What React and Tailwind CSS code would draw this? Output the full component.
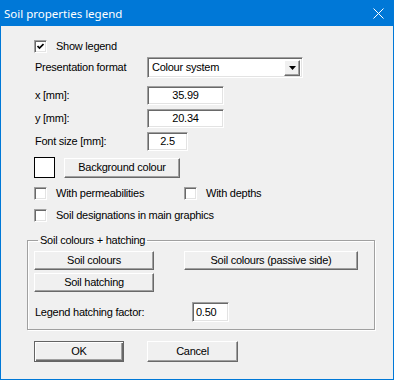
import React from "react";

const raised =
  "bg-[#f0f0f0] border border-t-white border-l-white border-r-[#696969] border-b-[#696969] shadow-[inset_-1px_-1px_0_#a0a0a0] flex items-center justify-center";
const sunken =
  "bg-white border border-t-[#a0a0a0] border-l-[#a0a0a0] border-r-white border-b-white shadow-[inset_1px_1px_0_#696969,inset_-1px_-1px_0_#e3e3e3] flex items-center";

function Check({ checked }) {
  return (
    <span className={"w-[13px] h-[13px] shrink-0 justify-center " + sunken}>
      {checked && (
        <svg width="7" height="7" viewBox="0 0 7 7">
          <polyline points="0.5,3 2.5,5 6.5,1" fill="none" stroke="black" strokeWidth="1.7" />
        </svg>
      )}
    </span>
  );
}

function Btn({ w, h = 19, children, cls = "" }) {
  return (
    <div className={raised + " " + cls} style={{ width: w, height: h }}>
      {children}
    </div>
  );
}

export default function App() {
  return (
    <div className="w-[394px] h-[380px] border border-[#0078d7] bg-[#f0f0f0] flex flex-col text-black text-[11px] leading-[13px] tracking-[-0.25px] font-['Liberation_Sans',Arial,sans-serif]">
      <div className="h-[25px] shrink-0 bg-[#0078d7] flex items-center justify-between pl-[3px] pr-[9px]">
        <span className="text-white text-[11.5px] tracking-normal font-['Noto_Sans',sans-serif]">Soil properties legend</span>
        <svg width="11" height="11" viewBox="0 0 11 11">
          <path d="M0.5 0.5 L10.5 10.5 M10.5 0.5 L0.5 10.5" stroke="white" strokeWidth="1" fill="none" />
        </svg>
      </div>

      <div className="flex flex-col">
        <div className="ml-[33px] mt-[14px] h-[13px] flex items-center gap-[9px]">
          <Check checked />
          <span>Show legend</span>
        </div>

        <div className="ml-[33px] mt-[4px] h-[21px] flex items-center">
          <span className="w-[113px] pl-[1px]">Presentation format</span>
          <div className={"w-[156px] h-[21px] justify-between pl-[4px] pr-[2px] " + sunken}>
            <span>Colour system</span>
            <div className={raised + " w-[16px] h-[16px]"}>
              <svg width="7" height="4" viewBox="0 0 7 4">
                <path d="M0 0 H7 L3.5 4 Z" fill="black" />
              </svg>
            </div>
          </div>
        </div>

        <div className="ml-[33px] mt-[8px] h-[19px] flex items-center">
          <span className="w-[113px] pl-[1px]">x [mm]:</span>
          <div className={"w-[77px] h-[19px] justify-center " + sunken}>35.99</div>
        </div>
        <div className="ml-[33px] mt-[4px] h-[19px] flex items-center">
          <span className="w-[113px] pl-[1px]">y [mm]:</span>
          <div className={"w-[77px] h-[19px] justify-center " + sunken}>20.34</div>
        </div>
        <div className="ml-[33px] mt-[4px] h-[19px] flex items-center">
          <span className="w-[113px] pl-[1px]">Font size [mm]:</span>
          <div className={"w-[41px] h-[19px] justify-center " + sunken}>2.5</div>
        </div>

        <div className="ml-[33px] mt-[6px] h-[21px] flex items-center gap-[9px]">
          <div className="w-[21px] h-[21px] bg-white border border-black" />
          <Btn w={116} h={20}>Background colour</Btn>
        </div>

        <div className="ml-[33px] mt-[9px] h-[13px] flex items-center">
          <div className="w-[150px] flex items-center gap-[9px]">
            <Check />
            <span>With permeabilities</span>
          </div>
          <div className="flex items-center gap-[9px]">
            <Check />
            <span>With depths</span>
          </div>
        </div>

        <div className="ml-[33px] mt-[9px] h-[13px] flex items-center gap-[9px]">
          <Check />
          <span>Soil designations in main graphics</span>
        </div>

        <fieldset className="ml-[26px] mt-[12px] w-[348px] border border-[#a0a0a0] shadow-[inset_1px_1px_0_white,1px_1px_0_white] pl-[6px] pt-[4px] pb-[7px]">
          <legend className="ml-[4px] px-[2px] h-[13px]">Soil colours + hatching</legend>
          <div className="flex items-center gap-[30px]">
            <Btn w={120}>Soil colours</Btn>
            <Btn w={174}>Soil colours (passive side)</Btn>
          </div>
          <div className="mt-[3px]">
            <Btn w={120}>Soil hatching</Btn>
          </div>
          <div className="mt-[10px] h-[20px] flex items-center">
            <span className="w-[158px] pl-[1px]">Legend hatching factor:</span>
            <div className={"w-[37px] h-[20px] pl-[3px] " + sunken}>0.50</div>
          </div>
        </fieldset>

        <div className="ml-[33px] mt-[11px] h-[21px] flex items-center gap-[23px]">
          <div className="w-[90px] h-[21px] border border-[#646464] flex">
            <div className="flex-1 bg-[#f0f0f0] flex items-center justify-center shadow-[inset_1px_1px_0_white,inset_-1px_-1px_0_#696969,inset_-2px_-2px_0_#a0a0a0]">
              OK
            </div>
          </div>
          <Btn w={91} h={21}>Cancel</Btn>
        </div>
      </div>
    </div>
  );
}
